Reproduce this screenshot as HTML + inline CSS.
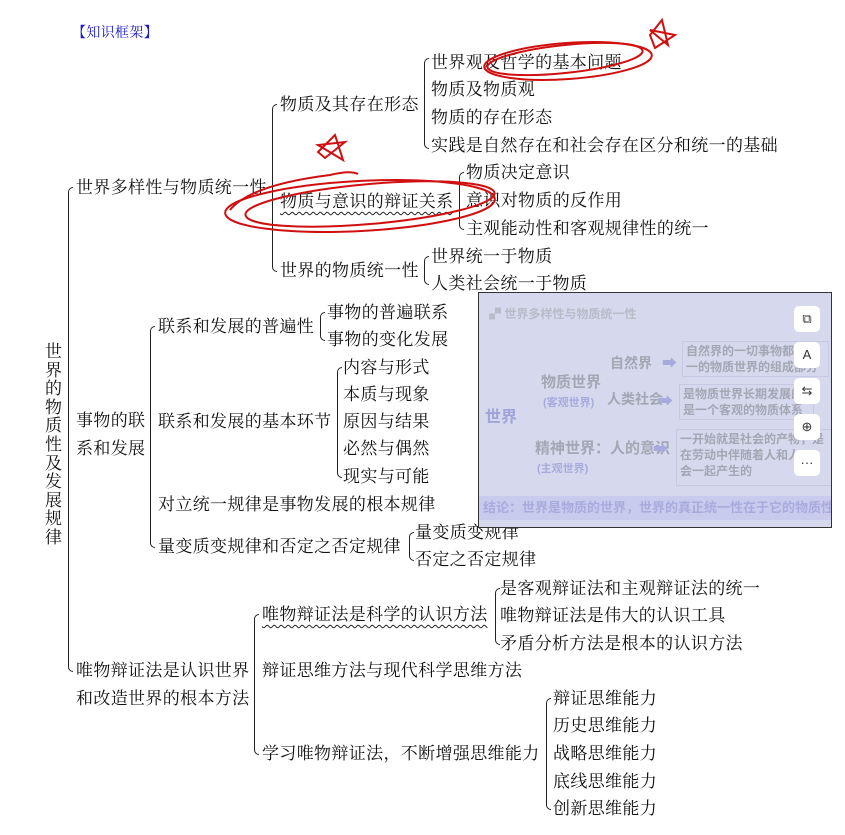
<!DOCTYPE html>
<html><head><meta charset="utf-8"><style>
body{margin:0;width:845px;height:835px;background:#fff;position:relative;overflow:hidden;font-family:"Liberation Serif","Noto Serif CJK SC",serif;}
.t{position:absolute;font-size:17px;letter-spacing:0.35px;color:#111;white-space:nowrap;line-height:22px;}
.b{position:absolute;border-left:1.5px solid #222;border-radius:6px 0 0 6px;border-top:1.5px solid #222;border-bottom:1.5px solid #222;width:4px;}
.photo{position:absolute;left:478px;top:292px;width:352px;height:234px;background:#d6d9ee;overflow:hidden;border:1px solid #333;}
.p{position:absolute;white-space:nowrap;font-family:"Liberation Sans","Noto Sans CJK SC",sans-serif;font-weight:bold;color:#a4a6b4;}
.btn{position:absolute;left:315px;width:26px;height:26px;background:#fff;border-radius:5px;font-size:13px;text-align:center;line-height:26px;color:#333;font-family:"Liberation Sans",sans-serif;}
</style></head><body>
<div class="t" style="left:72px;top:23px;font-size:14px;color:#1a1acc">【知识框架】</div>

<div class="t" style="left:431px;top:52px">世界观及哲学的基本问题</div>
<div class="t" style="left:431px;top:79px">物质及物质观</div>
<div class="t" style="left:431px;top:107px">物质的存在形态</div>
<div class="t" style="left:431px;top:135px">实践是自然存在和社会存在区分和统一的基础</div>
<div class="t" style="left:280px;top:94px">物质及其存在形态</div>
<div class="t" style="left:76px;top:177px">世界多样性与物质统一性</div>
<div class="t" style="left:466px;top:162px">物质决定意识</div>
<div class="t" style="left:466px;top:190px">意识对物质的反作用</div>
<div class="t" style="left:466px;top:218px">主观能动性和客观规律性的统一</div>
<div class="t" style="left:280px;top:191px;text-decoration:underline wavy #222 1px;text-underline-offset:4px">物质与意识的辩证关系</div>
<div class="t" style="left:280px;top:260px">世界的物质统一性</div>
<div class="t" style="left:431px;top:246px">世界统一于物质</div>
<div class="t" style="left:431px;top:273px">人类社会统一于物质</div>

<div class="t" style="left:45px;top:343px;width:18px;white-space:normal;line-height:18.6px">世界的物质性及发展规律</div>

<div class="t" style="left:158px;top:316px">联系和发展的普遍性</div>
<div class="t" style="left:327px;top:302px">事物的普遍联系</div>
<div class="t" style="left:327px;top:329px">事物的变化发展</div>
<div class="t" style="left:76px;top:410px">事物的联</div>
<div class="t" style="left:76px;top:438px">系和发展</div>
<div class="t" style="left:343px;top:357px">内容与形式</div>
<div class="t" style="left:343px;top:384px">本质与现象</div>
<div class="t" style="left:343px;top:411px">原因与结果</div>
<div class="t" style="left:343px;top:438px">必然与偶然</div>
<div class="t" style="left:343px;top:466px">现实与可能</div>
<div class="t" style="left:158px;top:411px">联系和发展的基本环节</div>
<div class="t" style="left:158px;top:494px">对立统一规律是事物发展的根本规律</div>
<div class="t" style="left:158px;top:536px">量变质变规律和否定之否定规律</div>
<div class="t" style="left:415px;top:522px">量变质变规律</div>
<div class="t" style="left:415px;top:549px">否定之否定规律</div>

<div class="t" style="left:262px;top:604px;text-decoration:underline wavy #222 1px;text-underline-offset:4px">唯物辩证法是科学的认识方法</div>
<div class="t" style="left:500px;top:578px">是客观辩证法和主观辩证法的统一</div>
<div class="t" style="left:500px;top:605px">唯物辩证法是伟大的认识工具</div>
<div class="t" style="left:500px;top:633px">矛盾分析方法是根本的认识方法</div>
<div class="t" style="left:76px;top:660px">唯物辩证法是认识世界</div>
<div class="t" style="left:76px;top:688px">和改造世界的根本方法</div>
<div class="t" style="left:262px;top:660px">辩证思维方法与现代科学思维方法</div>
<div class="t" style="left:262px;top:743px">学习唯物辩证法，不断增强思维能力</div>
<div class="t" style="left:553px;top:688px">辩证思维能力</div>
<div class="t" style="left:553px;top:715px">历史思维能力</div>
<div class="t" style="left:553px;top:743px">战略思维能力</div>
<div class="t" style="left:553px;top:771px">底线思维能力</div>
<div class="t" style="left:553px;top:798px">创新思维能力</div>

<div class="b" style="left:68px;top:187px;height:483px"></div>
<div class="b" style="left:272px;top:104px;height:166px"></div>
<div class="b" style="left:150px;top:326px;height:220px"></div>
<div class="b" style="left:254px;top:614px;height:139px"></div>
<div class="b" style="left:424px;top:58px;height:89px"></div>
<div class="b" style="left:459px;top:172px;height:56px"></div>
<div class="b" style="left:424px;top:256px;height:27px"></div>
<div class="b" style="left:320px;top:312px;height:27px"></div>
<div class="b" style="left:337px;top:367px;height:109px"></div>
<div class="b" style="left:409px;top:532px;height:27px"></div>
<div class="b" style="left:495px;top:588px;height:55px"></div>
<div class="b" style="left:546px;top:698px;height:110px"></div>

<svg style="position:absolute;left:0;top:0" width="845" height="835">
<g fill="none" stroke="#d01010" stroke-width="2">
<ellipse cx="568" cy="61" rx="84" ry="18" transform="rotate(-4 568 61)"/>
<ellipse cx="565" cy="59" rx="78" ry="14" transform="rotate(-6 565 59)"/>
<path d="M650 35 L662 20 L668 45 L650 30 L675 35 L655 48 Z"/>
<ellipse cx="360" cy="206" rx="135" ry="25" transform="rotate(-3 360 206)"/>
<ellipse cx="370" cy="204" rx="125" ry="20" transform="rotate(-5 370 204)"/>
<path d="M230 210 Q250 185 330 175 Q350 170 358 174"/>
<path d="M318 152 L335 135 L343 160 L318 145 L345 142 L325 158 Z"/>
</g>
</svg>

<div class="photo">
 <div class="p" style="left:10px;top:12px;font-size:12px;color:#b9bbc8">▞ 世界多样性与物质统一性</div>
 <div class="p" style="left:6px;top:110px;font-size:16px;color:#9ea4d8">世界</div>
 <div class="p" style="left:62px;top:78px;font-size:15px">物质世界</div>
 <div class="p" style="left:64px;top:101px;font-size:11px;color:#a6abdc">(客观世界)</div>
 <div class="p" style="left:131px;top:60px;font-size:14px">自然界</div>
 <div class="p" style="left:128px;top:96px;font-size:14px">人类社会</div>
 <div class="p" style="left:56px;top:144px;font-size:15px">精神世界：人的意识</div>
 <div class="p" style="left:58px;top:167px;font-size:11px;color:#a6abdc">(主观世界)</div>
 <div class="p" style="left:183px;top:59px;color:#a6abdc;font-size:15px">➡</div>
 <div class="p" style="left:179px;top:97px;color:#a6abdc;font-size:15px">➡</div>
 <div class="p" style="left:174px;top:145px;color:#a6abdc;font-size:15px">➡</div>
 <div class="p" style="left:203px;top:48px;font-size:12px;border:1px solid #c6c9e4;padding:1px 10px 1px 3px;line-height:16px">自然界的一切事物都是<br>一的物质世界的组成部分</div>
 <div class="p" style="left:200px;top:91px;font-size:12px;border:1px solid #c6c9e4;padding:1px 10px 1px 3px;line-height:16px">是物质世界长期发展的<br>是一个客观的物质体系</div>
 <div class="p" style="left:197px;top:136px;font-size:12px;border:1px solid #c6c9e4;padding:1px 10px 6px 3px;line-height:16px">一开始就是社会的产物，是<br>在劳动中伴随着人和人<br>会一起产生的</div>
 <div class="p" style="left:0;top:203px;width:352px;height:24px;background:#c8cbee;font-size:13px;line-height:24px;color:#a8acdc;padding-left:4px">结论：世界是物质的世界，世界的真正统一性在于它的物质性</div>
 <div class="btn" style="top:13px">⧉</div>
 <div class="btn" style="top:49px">A</div>
 <div class="btn" style="top:85px">⇆</div>
 <div class="btn" style="top:121px">⊕</div>
 <div class="btn" style="top:157px">···</div>
</div>
</body></html>
